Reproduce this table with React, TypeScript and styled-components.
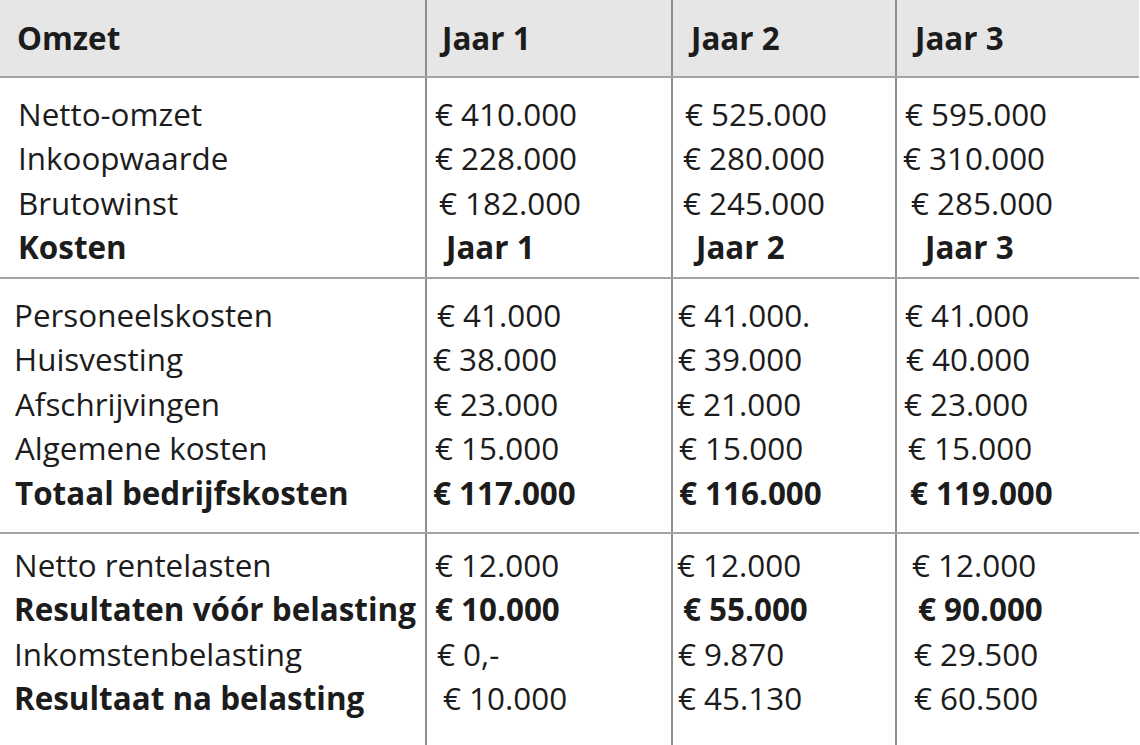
import React from "react";
import styled, { createGlobalStyle } from "styled-components";

const Global = createGlobalStyle`
  html, body { margin: 0; padding: 0; background: #ffffff; }
  body { font-family: "Open Sans", "Noto Sans", sans-serif; color: #1c1c1c; }
`;

const Table = styled.div`
  width: 1139px;
  height: 745px;
  display: flex;
  flex-direction: column;
  overflow: hidden;
  font-size: 31.4px;
  line-height: 44.5px;
`;

const Band = styled.div<{ $bg?: string; $grow?: boolean; $border?: boolean }>`
  display: grid;
  grid-template-columns: 425px 246px 224px 1fr;
  background: ${(p) => p.$bg || "transparent"};
  border-bottom: ${(p) => (p.$border ? "2px solid #a3a3a3" : "none")};
  flex: ${(p) => (p.$grow ? "1 1 auto" : "0 0 auto")};
`;

const Cell = styled.div<{ $pt: number; $pb: number; $first?: boolean }>`
  display: flex;
  flex-direction: column;
  justify-content: flex-start;
  padding-top: ${(p) => p.$pt}px;
  padding-bottom: ${(p) => p.$pb}px;
  border-left: ${(p) => (p.$first ? "none" : "2px solid #8e8e8e")};
  min-width: 0;
`;

const Line = styled.div<{ $bold?: boolean; $dx: number }>`
  height: 44.5px;
  white-space: nowrap;
  font-weight: ${(p) => (p.$bold ? 700 : 400)};
  padding-left: ${(p) => p.$dx}px;
`;

type L = { t: string; b?: boolean; dx: number };

type Section = { pt: number; pb: number; cols: L[][]; grow?: boolean; border?: boolean };

const header: L[] = [
  { t: "Omzet", b: true, dx: 17 },
  { t: "Jaar 1", b: true, dx: 15 },
  { t: "Jaar 2", b: true, dx: 18 },
  { t: "Jaar 3", b: true, dx: 18 },
];

const sections: Section[] = [
  {
    pt: 13.7,
    pb: 7,
    border: true,
    cols: [
      [
        { t: "Netto-omzet", dx: 18 },
        { t: "Inkoopwaarde", dx: 18 },
        { t: "Brutowinst", dx: 18 },
        { t: "Kosten", b: true, dx: 18 },
      ],
      [
        { t: "€ 410.000", dx: 8 },
        { t: "€ 228.000", dx: 8 },
        { t: "€ 182.000", dx: 12 },
        { t: "Jaar 1", b: true, dx: 19 },
      ],
      [
        { t: "€ 525.000", dx: 12 },
        { t: "€ 280.000", dx: 10 },
        { t: "€ 245.000", dx: 10 },
        { t: "Jaar 2", b: true, dx: 23 },
      ],
      [
        { t: "€ 595.000", dx: 8 },
        { t: "€ 310.000", dx: 6 },
        { t: "€ 285.000", dx: 14 },
        { t: "Jaar 3", b: true, dx: 28 },
      ],
    ],
  },
  {
    pt: 14,
    pb: 17,
    border: true,
    cols: [
      [
        { t: "Personeelskosten", dx: 14 },
        { t: "Huisvesting", dx: 14 },
        { t: "Afschrijvingen", dx: 15 },
        { t: "Algemene kosten", dx: 15 },
        { t: "Totaal bedrijfskosten", b: true, dx: 15 },
      ],
      [
        { t: "€ 41.000", dx: 10 },
        { t: "€ 38.000", dx: 6 },
        { t: "€ 23.000", dx: 7 },
        { t: "€ 15.000", dx: 8 },
        { t: "€ 117.000", b: true, dx: 6 },
      ],
      [
        { t: "€ 41.000.", dx: 5 },
        { t: "€ 39.000", dx: 5 },
        { t: "€ 21.000", dx: 4 },
        { t: "€ 15.000", dx: 6 },
        { t: "€ 116.000", b: true, dx: 6 },
      ],
      [
        { t: "€ 41.000", dx: 8 },
        { t: "€ 40.000", dx: 9 },
        { t: "€ 23.000", dx: 7 },
        { t: "€ 15.000", dx: 11 },
        { t: "€ 119.000", b: true, dx: 13 },
      ],
    ],
  },
  {
    pt: 8.7,
    pb: 0,
    grow: true,
    cols: [
      [
        { t: "Netto rentelasten", dx: 14 },
        { t: "Resultaten vóór belasting", b: true, dx: 14 },
        { t: "Inkomstenbelasting", dx: 14 },
        { t: "Resultaat na belasting", b: true, dx: 14 },
      ],
      [
        { t: "€ 12.000", dx: 8 },
        { t: "€ 10.000", b: true, dx: 8 },
        { t: "€ 0,-", dx: 10 },
        { t: "€ 10.000", dx: 16 },
      ],
      [
        { t: "€ 12.000", dx: 4 },
        { t: "€ 55.000", b: true, dx: 10 },
        { t: "€ 9.870", dx: 5 },
        { t: "€ 45.130", dx: 5 },
      ],
      [
        { t: "€ 12.000", dx: 15 },
        { t: "€ 90.000", b: true, dx: 21 },
        { t: "€ 29.500", dx: 17 },
        { t: "€ 60.500", dx: 17 },
      ],
    ],
  },
];

export default function App() {
  return (
    <>
      <Global />
      <Table>
        <Band $bg="#e6e6e6" $border>
          {header.map((h, i) => (
            <Cell key={i} $pt={15.75} $pb={15.75} $first={i === 0}>
              <Line $bold={h.b} $dx={h.dx}>
                {h.t}
              </Line>
            </Cell>
          ))}
        </Band>
        {sections.map((s, si) => (
          <Band key={si} $grow={s.grow} $border={s.border}>
            {s.cols.map((col, ci) => (
              <Cell key={ci} $pt={s.pt} $pb={s.pb} $first={ci === 0}>
                {col.map((l, li) => (
                  <Line key={li} $bold={l.b} $dx={l.dx}>
                    {l.t}
                  </Line>
                ))}
              </Cell>
            ))}
          </Band>
        ))}
      </Table>
    </>
  );
}
